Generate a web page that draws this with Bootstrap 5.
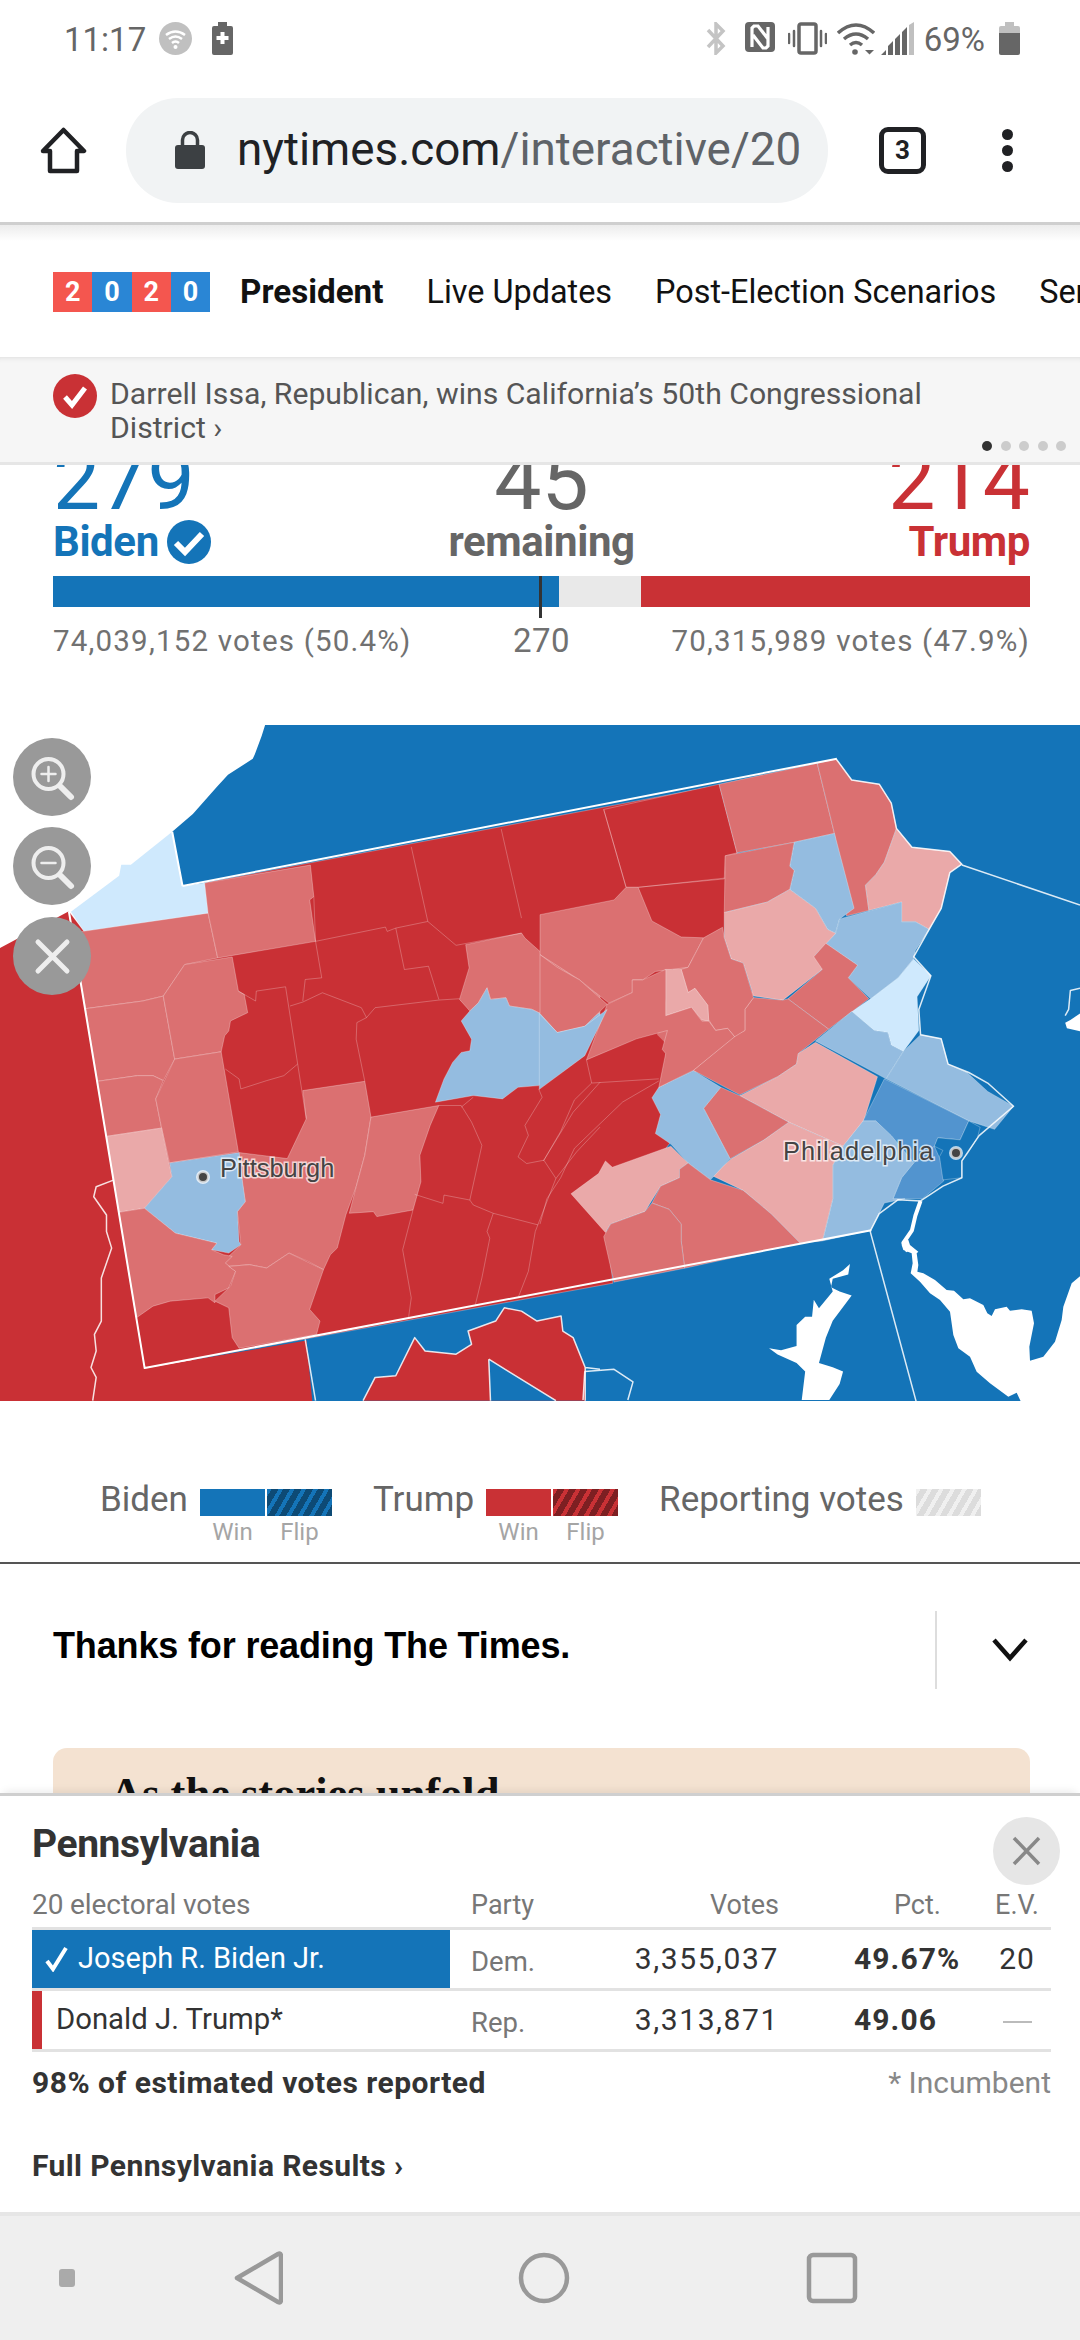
<!DOCTYPE html>
<html lang="en">
<head>
<meta charset="utf-8">
<title>Pennsylvania results</title>
<link rel="stylesheet" href="https://cdn.jsdelivr.net/npm/bootstrap@5.3.0/dist/css/bootstrap.min.css">
<style>
html,body{margin:0;background:#fff}
body{font-family:Roboto,"Liberation Sans",sans-serif;color:#333}
.phone{width:1080px;height:2340px;overflow:hidden}
.phone svg{display:block;flex:none}
.sbar{height:72px;padding:22px 60px 0 64px}
.sb-time{font-size:33px;line-height:35px;color:#666;width:82px;margin-right:13px}
.sb-pct{font-size:33px;line-height:35px;color:#666;margin:0 14px 0 10px}
.mr19{margin-right:19px}.mr13{margin-right:13px}.mr10{margin-right:10px}.mr6{margin-right:6px}.mr20{margin-right:20px}
.tbar{height:153px;border-bottom:3px solid #cfcfcf;padding:6px 0 0 40px}
.pill{width:702px;height:105px;background:#f1f3f4;border-radius:52px;margin-left:39px;padding-left:49px;gap:32px;overflow:hidden}
.urlt{font-size:45.8px;color:#5f6368;white-space:nowrap}
.urlt b{font-weight:400;color:#202124}
.tabs{width:47px;height:47px;border:5px solid #202124;border-radius:9px;margin-left:51px;font-size:26px;font-weight:700;color:#202124;line-height:37px;text-align:center}
.tdots{margin-left:76px;gap:5px}
.tdots i{display:block;width:11px;height:11px;border-radius:50%;background:#202124}
.snav{height:132px;padding:2px 0 0 53px;gap:43px;white-space:nowrap;overflow:hidden;background:linear-gradient(#ececec 0,#fff 16px)}
.yr{width:157px;height:40px;flex:none;margin-right:-13px}
.yr span{flex:1;text-align:center;color:#fff;font-weight:700;font-size:27px;line-height:40px}
.yr-r{background:#f4564f}.yr-b{background:#2a86d5}
.snav .nav-link{padding:0;color:#111;font-size:32.4px;line-height:40px;flex:none}
.snav .nav-link.on{font-weight:700;font-size:33.2px}
.tick{height:108px;background:#f6f6f6;border-bottom:3px solid #e6e6e6;padding:17px 0 0 53px;gap:13px;position:relative;box-shadow:inset 0 6px 5px -5px #ddd}
.tick p{margin:3px 0 0;font-size:30.2px;line-height:34px;color:#555;width:860px}
.tdots2{position:absolute;right:14px;bottom:11px;gap:8.500px}
.tdots2 i{display:block;width:10px;height:10px;border-radius:50%;background:#ccc}
.tdots2 i:first-child{background:#333}
.summ{height:260px;overflow:hidden;padding:0 50px 0 53px}
.tri{display:grid;grid-template-columns:1fr auto 1fr}
.n-big{font-size:84px;line-height:70px;margin-top:-19px;font-weight:400}
.n-lab{font-size:42px;line-height:44px;font-weight:700;margin-top:4px;letter-spacing:-.4px}
.t-d{color:#1474b8}.t-r{color:#c93135}.t-g{color:#666}
.vbar{height:31px;margin-top:12px;position:relative}
.vb-d{background:#1474b8}.vb-n{background:#e9e9e9}.vb-r{background:#c93135}
.vtick{position:absolute;left:486px;top:0;width:3px;height:42px;background:#333}
.vcount{font-size:29.5px;line-height:32px;margin-top:18px;color:#717171;letter-spacing:1.2px}
.vc-n{font-size:33px;letter-spacing:.4px}
.mapw{height:676px;position:relative;overflow:hidden}
.ctl{position:absolute;left:13px;width:78px;height:78px;border-radius:50%;background:#999;padding:0;border:0}
.ctl1{top:13px}.ctl2{top:102px}.ctl3{top:192px}
.ln{fill:none;stroke:#eee;stroke-linecap:round}
.cty{vector-effect:non-scaling-stroke;stroke:#fff;stroke-opacity:.28;stroke-width:1;stroke-linejoin:round}
.cd{fill:#c93035}.cm{fill:#db7071}.cl{fill:#eaa9a9}.cb{fill:#94bce0}.cv{fill:#cfe9fd}.cn{fill:#5294cf}.cp,.blu{fill:#1474b8}
.wat{fill:#fff}
.iln{vector-effect:non-scaling-stroke;fill:none;stroke:#fff;stroke-opacity:.25;stroke-width:1;stroke-linejoin:round}
.wln{vector-effect:non-scaling-stroke;fill:none;stroke:#fff;stroke-width:2;stroke-linejoin:round}
.wln1{stroke-width:1.5;stroke-opacity:.85}
.wln4{stroke-width:4}
.mtx{font-family:"Liberation Sans",sans-serif;font-size:25.4px;fill:#444;stroke:#fff;stroke-opacity:.7;stroke-width:3px;paint-order:stroke}
.mtx2{letter-spacing:1.1px}
.pin{fill:#444;stroke:#fff;stroke-opacity:.7;stroke-width:3}
.lgd{height:161px;padding:88px 0 0 100px;color:#666;font-size:35px;line-height:38px}
.lg-i{position:relative;margin-right:41px}
.lg-sw{width:65px;height:27px;margin-left:2px;position:relative}
.lg-n{margin:-8px 10px 0 0}
.lg-sub{position:absolute;top:30px;left:0;right:0;text-align:center;font-size:24px;line-height:26px;color:#a5a5a5}
.sw-d{background:#1474b8}.sw-r{background:#c93135}
.sw-df{background:repeating-linear-gradient(120deg,#1474b8 0 4px,#0d4a75 4px 10px)}
.sw-rf{background:repeating-linear-gradient(120deg,#c93135 0 4px,#7d1f22 4px 10px)}
.sw-g{background:repeating-linear-gradient(120deg,#f0f0f0 0 4px,#dcdcdc 4px 10px)}
.rule{height:2px;background:#555}
.thx{height:184px;padding:47px 52px 0 53px}
.thx h2{margin:0;font-size:36px;line-height:70px;font-weight:700;color:#000;font-family:"Liberation Sans",sans-serif;letter-spacing:-.15px;flex:1}
.thx-sep{width:2px;height:78px;background:#ddd;margin-right:55px}
.prom{height:45px;overflow:hidden;margin:0 50px 0 53px;background:#f4e2d1;border-radius:14px 14px 0 0;padding:20px 0 0 57px}
.prom div{font-family:"Liberation Serif",serif;font-weight:700;font-size:44.5px;line-height:50px;color:#111}
.panel{height:419px;border-top:3px solid #cfcfcf;padding:0 29px 0 32px;position:relative;background:#fff;box-shadow:0 -6px 8px -4px rgba(0,0,0,.08)}
.pa-t{font-size:39px;line-height:44px;font-weight:700;color:#333;padding-top:26px;height:91px;letter-spacing:-.4px}
.pa-x{position:absolute;right:20px;top:21px;width:67px;height:68px;border-radius:50%;background:#e6e6e6;border:0;padding:0}
.res{width:1019px;table-layout:fixed;border-collapse:collapse;margin:0;--bs-table-bg:transparent}
.res th,.res td{padding:0;border:0;vertical-align:middle;white-space:nowrap}
.res thead th{height:41px;font-size:27px;font-weight:400;color:#777;border-bottom:3px solid #e2e2e2;line-height:28px;padding-bottom:3px}
.res tbody td{height:61px;font-size:30px;letter-spacing:1.6px;color:#333;border-bottom:3px solid #e2e2e2}
.c1{width:418px}.c2{width:170px}.c3{width:159px}.c4{width:204px}.c5{width:68px}
.res .pad2{padding-left:21px}.res .pad4{padding-left:75px}
.res .el{font-size:28px;letter-spacing:-.1px}
.res .pty{font-size:27.5px;color:#777;padding-top:7px;letter-spacing:0}
.res .pv{font-weight:700;letter-spacing:1.1px}
.res .nm-d{background:#1474b8;color:#fff;padding-left:13px;font-size:29px;letter-spacing:0}
.res .nm-r{padding-left:0;font-size:29.3px;letter-spacing:0}
.res .num2{letter-spacing:1px}
.nm-in{gap:10px}
.rbar{width:10px;height:58px;background:#c93135;margin-right:14px}
.dash{display:inline-block;width:29px;height:2px;background:#bbb;vertical-align:middle}
.foot{margin-top:14px;font-size:30px;line-height:34px}
.foot b{font-weight:700;color:#333;letter-spacing:.5px}
.foot span{color:#888}
.full{font-size:30px;font-weight:700;color:#333;margin-top:49px;line-height:34px;letter-spacing:.4px}
.anav{height:128px;background:#efefef;border-top:4px solid #e6e6e6;padding-left:59px}
.nv{fill:none;stroke:#999;stroke-width:4.5;stroke-linejoin:round}
.nv-sq{width:16px;height:18px;border-radius:3px;background:#aaa;margin-right:158px}
.mr234{margin-right:234px}
.gy1{fill:#c0c0c0}.gy6{fill:#666}
.st6{fill:none;stroke:#666;stroke-linecap:round}
</style>
</head>
<body>
<div class="phone d-flex flex-column">

<div class="sbar d-flex align-items-start">
  <span class="sb-time">11:17</span>
  <svg class="mr20" width="33" height="33" viewBox="0 0 33 33"><ellipse cx="16.5" cy="16.5" rx="16.5" ry="16.5" class="gy1"/><path d="M7 13q9.500-7 19 0M10 17q6.500-5 13 0M13 21q3.500-3 7 0" fill="none" stroke="#fff" stroke-width="2.500"/><circle cx="16.500" cy="25" r="2" fill="#fff"/></svg>
  <svg width="21" height="33" viewBox="0 0 21 33"><path d="M6 0h9v4h4a2 2 0 0 1 2 2v25a2 2 0 0 1-2 2H2a2 2 0 0 1-2-2V6a2 2 0 0 1 2-2h4z" class="gy6"/><path d="M8.500 14h4v4h4v4h-4v4h-4v-4h-4v-4h4z" fill="#fff" transform="translate(0,-4)"/></svg>
  <span class="flex-grow-1"></span>
  <svg class="mr19" width="20" height="33" viewBox="0 0 20 33"><path d="M2 8l15 16-7 7V2l7 7L2 25" fill="none" stroke="#c4c4c4" stroke-width="3.500"/></svg>
  <svg class="mr13" width="30" height="30" viewBox="0 0 30 30"><rect width="30" height="30" rx="4" class="gy6"/><path d="M7 25V6l2-2h4l10 13M23 5v19l-2 2h-3L8 13" fill="none" stroke="#fff" stroke-width="3.200"/></svg>
  <svg class="mr10" width="39" height="33" viewBox="0 0 39 33"><rect x="11" y="2" width="17" height="29" rx="2" fill="none" stroke="#666" stroke-width="3.500"/><path d="M6 9v15M1 12v9M33 9v15M38 12v9" class="st6" stroke-width="2.500"/></svg>
  <svg class="mr6" width="38" height="33" viewBox="0 0 38 33"><path d="M1 11q18-16 36 0M7 17q12-10 24 0M13 23q6-5 12 0" fill="none" stroke="#666" stroke-width="3.500"/><circle cx="18" cy="30" r="2.800" fill="#666"/><path d="M28 28h9l-4.500 4.500z" fill="#666"/></svg>
  <svg width="33" height="33" viewBox="0 0 33 33"><path d="M0 33l5-5v5zM7 33v-9l5-5v14zM14 33V17l5-5v21zM21 33V10l5-5v28z" class="gy6"/><path d="M28 33V3l5-3v33z" class="gy1"/></svg>
  <span class="sb-pct">69%</span>
  <svg width="21" height="33" viewBox="0 0 21 33"><path d="M6 0h9v4h4a2 2 0 0 1 2 2v5H0V6a2 2 0 0 1 2-2h4z" class="gy1"/><path d="M0 11h21v20a2 2 0 0 1-2 2H2a2 2 0 0 1-2-2z" class="gy6"/></svg>
</div>

<div class="tbar d-flex align-items-center">
  <svg width="47" height="47" viewBox="0 0 47 47"><path d="M23.500 3L44 24h-7v20H10V24H3z" fill="none" stroke="#202124" stroke-width="4.500" stroke-linejoin="round"/></svg>
  <div class="pill d-flex align-items-center">
    <svg width="30" height="38" viewBox="0 0 30 38"><path d="M3 14h24a3 3 0 0 1 3 3v18a3 3 0 0 1-3 3H3a3 3 0 0 1-3-3V17a3 3 0 0 1 3-3z" fill="#3c4043"/><path d="M7.500 15V9a7.500 7.500 0 0 1 15 0v6" fill="none" stroke="#3c4043" stroke-width="3.500"/></svg>
    <span class="urlt"><b>nytimes.com</b>/interactive/20</span>
  </div>
  <div class="tabs">3</div>
  <div class="tdots d-flex flex-column"><i></i><i></i><i></i></div>
</div>

<nav class="snav nav flex-nowrap align-items-center">
  <div class="yr d-flex"><span class="yr-r">2</span><span class="yr-b">0</span><span class="yr-r">2</span><span class="yr-b">0</span></div>
  <a class="nav-link on" href="#">President</a>
  <a class="nav-link" href="#">Live Updates</a>
  <a class="nav-link" href="#">Post-Election Scenarios</a>
  <a class="nav-link" href="#">Senate</a>
</nav>

<div class="tick d-flex align-items-start">
  <svg width="44" height="44" viewBox="0 0 44 44"><circle cx="22" cy="22" r="22" fill="#c93135"/><path d="M12 23l7 8 13-17" fill="none" stroke="#fff" stroke-width="5"/></svg>
  <p>Darrell Issa, Republican, wins California’s 50th Congressional District ›</p>
  <div class="tdots2 d-flex"><i></i><i></i><i></i><i></i><i></i></div>
</div>

<section class="summ">
  <div class="tri">
    <div class="n-big t-d">279</div><div class="n-big t-g text-center">45</div><div class="n-big t-r text-end">214</div>
  </div>
  <div class="tri">
    <div class="n-lab t-d d-flex align-items-center gap-2">Biden
      <svg width="44" height="44" viewBox="0 0 44 44"><circle cx="22" cy="22" r="22" fill="#1474b8"/><path d="M9 23l9 9 17-18" fill="none" stroke="#fff" stroke-width="6"/></svg>
    </div>
    <div class="n-lab t-g text-center">remaining</div>
    <div class="n-lab t-r text-end">Trump</div>
  </div>
  <div class="vbar d-flex">
    <div class="vb-d" style="width:51.8%"></div><div class="vb-n" style="width:8.4%"></div><div class="vb-r" style="width:39.8%"></div>
    <div class="vtick"></div>
  </div>
  <div class="tri vcount">
    <div>74,039,152 votes (50.4%)</div><div class="text-center vc-n">270</div><div class="text-end">70,315,989 votes (47.9%)</div>
  </div>
</section>

<div class="mapw">
<svg width="1080" height="676" viewBox="0 725 1080 676">
  <!-- neighbouring states -->
  <g transform="translate(0,700) scale(.68878,.45918)">
    <path class="blu" d="M385 54H1568V1600H280V420L265 405L250 287L280 248L315 189L331 163L367 128L370 118L380 78Z"/>
    <path class="cd" d="M0 540L100 460L210 1455L445 1395L458 1600H0Z"/>
    <path class="cv" d="M103 461L173 383L176 359L190 359L250 287L265 405L298 398L305 465L125 510Z"/>
    <path class="cd cty" d="M298 398L1043 186L1070 332L1053 460L1000 600L965 720L975 960L880 1150L890 1270L210 1455L100 460L125 510L305 465Z"/>
  </g>

  <!-- western counties -->
  <g transform="translate(60,880) scale(.34439,.33163)">
    <path class="cty cm" d="M33 160L430 100L458 235L362 255L300 350L240 365L74 388Z"/>
    <path class="cty cm" d="M420 9L727 -45L737 50L725 60L742 185L458 235L430 100Z"/>
    <path class="cty cm" d="M74 388L240 365L300 350L333 540L300 605L270 590L225 590L109 607Z"/>
    <path class="cty cm" d="M300 350L362 255L500 232L518 335L535 345L545 400L495 425L490 455L478 470L468 518L333 540Z"/>
    <path class="cty cm" d="M109 607L225 590L270 590L300 605L278 660L295 748L135 773Z"/>
    <path class="cty cm" d="M333 540L468 518L518 820L318 853L295 748L278 660Z"/>
    <path class="cty cl" d="M135 773L295 748L325 895L245 990L171 1002Z"/>
    <path class="cty cm" d="M715 720L705 635L885 607L903 715L885 830L860 925L830 1010L805 1110L785 1130L765 1175L720 1150L665 1125L600 1170L550 1160L490 1165L475 1150L525 1100L515 1000L538 970L525 890L520 822L660 840Z"/>
    <path class="cty cb" d="M318 853L520 822L530 910L538 970L515 1000L520 1090L525 1100L490 1125L440 1115L455 1095L335 1065L245 990L325 895Z"/>
    <path class="cty cm" d="M171 1002L245 990L335 1065L455 1095L440 1115L475 1130L500 1135L480 1155L510 1180L490 1230L450 1250L450 1275L430 1260L320 1270L270 1285L222 1320Z"/>
    <path class="cty cm" d="M490 1165L550 1160L600 1170L665 1125L765 1175L725 1295L755 1330L745 1370L520 1412L500 1380L490 1290L450 1270L495 1225L510 1180Z"/>
    <path class="cty cm" d="M903 715L1100 680L1075 740L1045 830L1048 910L1025 995L920 1015L910 1000L840 1005L860 925L885 830Z"/>
    <path class="cty cm" d="M1178 195L1340 160L1350 175L1415 235L1490 290L1568 350L1568 400L1520 430L1445 460L1410 410L1370 390L1305 380L1295 355L1250 360L1240 325L1215 370L1190 395L1160 360L1188 265Z"/>
    <path class="cty cb" d="M1240 325L1250 360L1295 355L1305 380L1370 390L1410 410L1445 460L1520 430L1568 400L1568 430L1520 520L1390 620L1330 625L1285 660L1200 650L1090 670L1115 600L1140 550L1165 520L1190 515L1195 480L1165 425L1190 395L1215 370Z"/>
    <path class="iln" d="M737 50L742 185L760 295L712 300L705 365M742 185L945 142L950 155L975 145L1068 125L1150 197L1340 160M975 145L1000 270L1070 260L1085 310L1100 360M1020 -100L1068 125M1281 -154L1340 115M518 335L568 365L570 335L655 322L715 720M668 380L705 368L762 340L875 385L890 415L915 385L1100 362L1160 358M890 415L862 430L860 480L885 607M480 570L520 600L525 630L600 605L650 590L690 555M1100 680L1165 680L1195 730L1225 800L1190 965L1115 950L1112 975L1030 948M1200 655L1165 685M1190 965L1200 980L1258 1005L1388 1040M1258 1005L1240 1060L1248 1080L1225 1200L1205 1285M1025 995L995 1115L1020 1260L1012 1320M1390 630L1400 655L1350 740L1360 770L1330 835L1355 855L1405 845L1490 700L1568 610M1405 845L1440 900L1380 1060L1360 1180L1330 1260M1440 900L1500 820L1568 745"/>
    <path class="cd" d="M880 1570L915 1500L975 1495L1030 1380L1060 1420L1150 1430L1195 1400L1185 1360L1265 1330L1290 1290L1340 1300L1385 1330L1455 1315L1460 1360L1490 1380L1525 1470L1525 1570Z"/>
    <path class="blu" d="M1245 1445L1440 1570L1250 1570Z"/>
    <path class="wln wln1" d="M880 1570L915 1500L975 1495L1030 1380L1060 1420L1150 1430L1195 1400L1185 1360L1265 1330L1290 1290L1340 1300L1385 1330L1455 1315L1460 1360L1490 1380L1525 1470L1525 1570M1245 1445L1440 1570M1245 1445L1250 1570M155 905L105 925L98 955L135 1010L135 1060L150 1110L120 1200L120 1330L100 1370L105 1420L90 1470L105 1500L95 1570M1525 1470L1568 1475"/>
    <path class="wln wln1" d="M712 1385L742 1570"/>
  </g>

  <!-- eastern counties and water -->
  <g transform="translate(540,740) scale(.34439,.42092)">
    <path class="cd" d="M280 340L540 325L535 475L470 480L320 440Z"/>
    <path class="cm" d="M400 500L620 600L600 700L450 790L340 700Z"/>
    <path class="cty cd" d="M185 165L520 105L572 268L538 275L535 330L285 350L250 350Z"/>
    <path class="iln" d="M185 165L250 350M285 350L537 328"/>
    <path class="cty cm" d="M520 105L805 55L855 222L738 243L572 268Z"/>
    <path class="cty cm" d="M805 55L860 45L905 95L985 105L1020 150L1035 210L1000 290L975 320L945 345L955 405L890 418L855 222Z"/>
    <path class="cty cb" d="M738 243L855 222L912 400L870 425L858 460L835 450L800 400L725 355L738 310L725 300Z"/>
    <path class="cty cm" d="M538 275L738 243L725 300L738 310L725 355L660 385L535 410Z"/>
    <path class="cty cl" d="M1035 210L1080 255L1190 265L1225 295L1190 315L1165 400L1130 450L1090 432L1050 432L1050 385L955 405L945 345L975 320L1000 290Z"/>
    <path class="cty cl" d="M535 410L660 385L725 355L800 400L835 450L860 460L800 510L820 545L705 618L620 608L590 530L555 520L535 470Z"/>
    <path class="cty cb" d="M858 460L870 425L1050 385L1050 432L1090 432L1130 450L1090 500L1085 520L1040 565L960 615L895 565L922 535L830 485Z"/>
    <path class="cty cv" d="M905 645L960 615L1040 565L1085 520L1135 560L1095 610L1100 690L1055 740L1020 725L1010 695L970 690Z"/>
    <path class="cty cm" d="M830 483L922 535L895 565L955 615L838 687L720 615L820 545L795 515Z"/>
    <path class="cty cm" d="M620 612L705 618L720 615L838 687L750 745L745 770L690 800L580 843L445 785L570 700L595 690L595 640Z"/>
    <path class="cty cb" d="M905 645L970 690L1010 695L1020 725L1055 740L1005 805L800 715Z"/>
    <path class="cty cb" d="M1055 740L1105 700L1165 710L1185 770L1240 790L1300 835L1375 870L1320 925L1245 905L1005 805Z"/>
    <path class="cty cl" d="M800 718L980 800L940 905L880 965L722 908L580 845L690 800L745 770L750 745Z"/>
    <path class="cty cn" d="M1000 805L1245 905L1220 950L1155 945L1145 970L1085 1005L1020 940L975 905L938 905Z"/>
    <path class="cty cn" d="M1145 965L1172 1015L1172 1048L1110 1090L1025 1090L1050 1040L1085 1005Z"/>
    <path class="cty cp" d="M1245 905L1278 920L1270 945L1240 985L1225 1000L1225 1040L1170 1045L1160 990L1170 975L1145 965L1155 945L1220 950Z"/>
    <path class="cty cb" d="M938 905L975 905L1020 940L1085 1005L1050 1040L1025 1090L1060 1090L1000 1100L960 1165L820 1190L850 1090L850 1010L880 965Z"/>
    <path class="cty cl" d="M722 908L880 965L850 1010L850 1090L820 1190L755 1195L670 1125L590 1070L500 1035L555 995L650 950Z"/>
    <path class="cty cm" d="M580 845L722 908L650 950L552 995L475 875L525 825Z"/>
    <path class="cty cb" d="M445 785L525 825L475 875L552 995L495 1045L430 1005L380 960L335 935L350 890L325 850L345 825Z"/>
    <path class="cty cl" d="M380 965L430 1005L405 1020L405 1040L350 1060L305 1120L205 1150L190 1170L90 1078L170 1030L190 1000L210 1015Z"/>
    <path class="cty cm" d="M430 1005L495 1045L590 1070L670 1125L755 1195L420 1255L410 1190L410 1150L375 1115L325 1100L350 1060L405 1040L405 1020Z"/>
    <path class="cty cm" d="M305 1120L325 1100L375 1115L410 1150L410 1190L420 1255L215 1288L185 1180L205 1150Z"/>
    <path class="cty cm" d="M0 415L215 380L250 350L285 350L325 430L410 468L475 470L430 540L335 550L298 570L268 570L268 600L200 625L115 570L0 510Z"/>
    <path class="cty cm" d="M0 510L50 540L115 570L195 628L130 680L50 695L0 650Z"/>
    <path class="cty cm" d="M475 470L530 445L535 470L555 520L590 530L620 612L595 640L595 690L565 705L545 685L510 690L490 665L487 630L450 590L430 600L410 545L430 540Z"/>
    <path class="cty cl" d="M365 545L410 545L430 600L450 590L487 630L490 668L470 665L440 635L365 655Z"/>
    <path class="cty cm" d="M195 628L268 600L268 570L298 570L365 545L365 655L440 635L470 668L490 668L510 690L545 685L565 705L445 785L345 825L365 745L355 735L370 690L280 710L135 760Z"/>
    <path class="cty cb" d="M-2 650L50 695L130 680L195 640L130 750L-2 830Z"/>
    <path class="iln" d="M135 760L150 815L345 805M150 815L100 855L60 930L10 1000M345 810L240 860L100 970L60 1040M60 1040L20 1090L0 1150"/>
    <path class="wat" d="M900 1245L895 1270L850 1280L845 1300L870 1310L905 1320L850 1380L830 1420L810 1480L850 1490L880 1500L870 1530L840 1568L760 1568L770 1500L745 1480L690 1460L665 1445L700 1450L745 1440L745 1390L770 1370L790 1370L795 1330L810 1350L850 1310L840 1280L880 1260Z"/>
    <path class="wat" d="M1568 650L1540 665L1525 672L1530 685L1568 692Z"/>
    <path class="wln wln4" d="M1105 1095L1090 1130L1080 1165L1055 1195L1068 1215"/>
    <path class="wln wln1" d="M1568 590L1540 595L1535 640L1525 655M958 1165L1095 1580M1225 297L1568 392M130 1500L215 1495L270 1525L255 1568M130 1500L125 1568"/>
    <path class="wln wln1" d="M960 1165L985 1125L1040 1092L1105 1095L1170 1060L1225 1040L1225 1000L1275 940L1375 870L1300 815L1245 790L1185 770L1165 710L1105 700L1100 640L1135 560L1085 515L1130 450L1165 400L1190 315L1225 295L1190 265L1080 255L1035 210L1020 150L985 105L905 95L860 45"/>
  </g>

  <!-- Delaware Bay -->
  <g transform="translate(880,1240) scale(.33333)">
    <path class="wat" d="M65 15L70 30L95 40L98 70L92 100L120 125L150 160L180 180L210 215L220 285L235 325L270 350L290 395L330 430L385 470L410 458L425 490H610V100L575 130L550 200L545 240L525 305L490 350L450 362L448 320L462 250L455 212L425 208L390 212L380 200L345 208L335 228L322 220L310 195L270 175L250 178L222 152L200 150L165 120L130 100L112 95L115 75L110 40L115 35L90 15L85 0L70 0Z"/>
  </g>

  <g transform="translate(0,700) scale(.68878,.45918)">
    <path class="wln" d="M265 405L1215 128M100 460L210 1455L1265 1155M250 287L265 405"/>
  </g>
  <circle class="pin" cx="203" cy="1177" r="5.500"/>
  <circle class="pin" cx="956" cy="1153" r="5.500"/>
  <text class="mtx" x="220" y="1177">Pittsburgh</text>
  <text class="mtx mtx2" x="783" y="1160">Philadelphia</text>
</svg>
  <button type="button" class="ctl ctl1" aria-label="Zoom in"><svg width="78" height="78" viewBox="0 0 78 78"><circle class="ln" cx="35.500" cy="36" r="15" stroke-width="4"/><path class="ln" d="M48 49l10 10" stroke-width="6"/><path class="ln" d="M28.500 36h14M35.500 29v14" stroke-width="2.500"/></svg></button>
  <button type="button" class="ctl ctl2" aria-label="Zoom out"><svg width="78" height="78" viewBox="0 0 78 78"><circle class="ln" cx="35.500" cy="36" r="15" stroke-width="4"/><path class="ln" d="M48 49l10 10" stroke-width="6"/><path class="ln" d="M28.500 36h14" stroke-width="2.500"/></svg></button>
  <button type="button" class="ctl ctl3" aria-label="Close"><svg width="78" height="78" viewBox="0 0 78 78"><path class="ln" d="M25 25l29 29M54 25L25 54" stroke-width="5"/></svg></button>
</div>

<div class="lgd d-flex align-items-start">
  <span class="lg-n">Biden</span>
  <div class="lg-i d-flex">
    <div class="lg-sw sw-d"><div class="lg-sub">Win</div></div><div class="lg-sw sw-df"><div class="lg-sub">Flip</div></div>
  </div>
  <span class="lg-n">Trump</span>
  <div class="lg-i d-flex">
    <div class="lg-sw sw-r"><div class="lg-sub">Win</div></div><div class="lg-sw sw-rf"><div class="lg-sub">Flip</div></div>
  </div>
  <span class="lg-n">Reporting votes</span>
  <div class="lg-sw sw-g"></div>
</div>
<div class="rule"></div>

<div class="thx d-flex align-items-start">
  <h2>Thanks for reading The Times.</h2>
  <div class="thx-sep"></div>
  <svg class="mt-4" width="36" height="28" viewBox="0 0 36 28"><path d="M2 5l16 18L34 5" fill="none" stroke="#111" stroke-width="4.500"/></svg>
</div>
<div class="prom"><div>As the stories unfold</div></div>

<div class="panel">
  <div class="pa-t">Pennsylvania</div>
  <button type="button" class="pa-x" aria-label="Close"><svg width="67" height="68" viewBox="0 0 67 68"><path d="M21 21l25 26M46 21L21 47" fill="none" stroke="#888" stroke-width="3.500"/></svg></button>
  <table class="table res">
    <colgroup><col class="c1"><col class="c2"><col class="c3"><col class="c4"><col class="c5"></colgroup>
    <thead><tr><th class="el">20 electoral votes</th><th class="pad2">Party</th><th class="text-end">Votes</th><th class="pad4 text-start"><span class="ms-4 ps-3">Pct.</span></th><th class="text-center">E.V.</th></tr></thead>
    <tbody>
      <tr><td class="nm-d"><div class="d-flex align-items-center nm-in"><svg width="23" height="26" viewBox="0 0 23 26"><path d="M2 15l6 8L21 2" fill="none" stroke="#fff" stroke-width="4"/></svg>Joseph R. Biden Jr.</div></td><td class="pad2 pty">Dem.</td><td class="text-end">3,355,037</td><td class="pad4 pv">49.67%</td><td class="text-center num2">20</td></tr>
      <tr><td class="nm-r"><div class="d-flex align-items-center"><span class="rbar"></span>Donald J. Trump*</div></td><td class="pad2 pty">Rep.</td><td class="text-end">3,313,871</td><td class="pad4 pv">49.06</td><td class="text-center"><span class="dash"></span></td></tr>
    </tbody>
  </table>
  <div class="foot d-flex justify-content-between"><b>98% of estimated votes reported</b><span>* Incumbent</span></div>
  <div class="full">Full Pennsylvania Results ›</div>
</div>

<div class="anav d-flex align-items-center">
  <span class="nv-sq"></span>
  <svg class="mr234" width="50" height="54" viewBox="0 0 50 54"><path class="nv" d="M45 3L4 27l41 24c2 1 3 0 3-2V5c0-2-1-3-3-2z"/></svg>
  <svg class="mr234" width="54" height="54" viewBox="0 0 54 54"><circle class="nv" cx="27" cy="27" r="23"/></svg>
  <svg width="54" height="54" viewBox="0 0 54 54"><rect class="nv" x="4" y="4" width="46" height="46" rx="4"/></svg>
</div>

</div>
</body>
</html>
